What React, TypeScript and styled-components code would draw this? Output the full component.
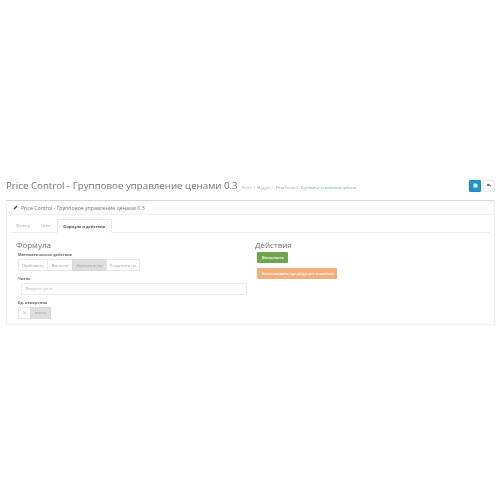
import React from "react";
import styled, { createGlobalStyle } from "styled-components";

const Global = createGlobalStyle`
  html, body { margin: 0; background: #fff; font-family: "Open Sans", "Noto Sans", sans-serif; }
  * { box-sizing: border-box; }
`;
const Page = styled.div`width: 500px; height: 500px; padding: 179px 5px 0 6px; background: #fff; filter: blur(0.3px);`;
const Header = styled.div`display: flex; align-items: center; height: 13px; margin-bottom: 8px;`;
const Title = styled.h1`margin: 0; font-size: 9.72px; font-weight: 400; color: #747474; white-space: nowrap; line-height: 13px;`;
const Crumbs = styled.div`display: flex; gap: 1.8px; margin-left: 4px; font-size: 3.65px; white-space: nowrap; padding-top: 3px;`;
const Crumb = styled.span<{ $muted?: boolean }>`color: ${p => (p.$muted ? "#a5a5a5" : "#7fa3bd")};`;
const Actions = styled.div`margin-left: auto; display: flex; gap: 2px;`;
const IconBtn = styled.div<{ $primary?: boolean }>`
  width: 12px; height: 12px; border-radius: 1px; display: flex; align-items: center; justify-content: center;
  background: ${p => (p.$primary ? "#1e91cf" : "#fff")};
  border: 1px solid ${p => (p.$primary ? "#1a85bf" : "#eaeaea")};
`;
const Panel = styled.section`border: 1px solid #f0f0f0; border-top: 1px solid #d4d4d4; height: 125px;`;
const PanelHead = styled.div`
  height: 14px; border-bottom: 1px solid #f1f1f1; background: #fcfcfc; padding-left: 6px;
  display: flex; align-items: center; gap: 3px; font-size: 5.2px; color: #777;
`;
const Tabs = styled.div`display: flex; align-items: flex-end; height: 18px; margin: 0 4px 0 3px; border-bottom: 1px solid #efefef; padding-left: 0.5px;`;
const Tab = styled.div<{ $active?: boolean }>`
  height: ${p => (p.$active ? "14px" : "13px")}; padding: 0 5.5px; display: flex; align-items: center;
  font-size: 3.8px; white-space: nowrap;
  color: ${p => (p.$active ? "#555" : "#a5a5a5")}; font-weight: ${p => (p.$active ? 700 : 400)};
  ${p => p.$active && "border: 1px solid #e8e8e8; border-bottom: 1px solid #fff; margin-bottom: -1px; background:#fff;"}
`;
const Columns = styled.div`display: grid; grid-template-columns: 241px 1fr; padding: 6px 0 0 9px;`;
const Heading = styled.h2`margin: 0; font-size: 8px; font-weight: 400; color: #707070; line-height: 11px;`;
const FormCol = styled.div`display: flex; flex-direction: column;`;
const FormBody = styled.div`display: flex; flex-direction: column; padding: 2px 0 0 2px;`;
const Label = styled.div`font-size: 3.8px; font-weight: 700; color: #6a6a6a; line-height: 5px; white-space: nowrap; margin-bottom: 2px;`;
const Group = styled.div`display: flex; align-self: flex-start; margin-bottom: 4.5px;`;
const Seg = styled.div<{ $on?: boolean; $w: number }>`
  width: ${p => p.$w}px; height: 12px; display: flex; align-items: center; justify-content: center;
  font-size: 4px; color: #999; white-space: nowrap;
  border: 1px solid ${p => (p.$on ? "#d8d8d8" : "#e8e8e8")}; margin-left: -1px;
  background: ${p => (p.$on ? "#dedede" : "#fff")};
  &:first-child { margin-left: 0; }
`;
const Input = styled.div`
  width: 226px; height: 12px; margin: 0 0 5px 3px; border: 1px solid #ececec; padding-left: 4px;
  display: flex; align-items: center; font-size: 3.8px; color: #b5b5b5;
`;
const ActionCol = styled.div`display: flex; flex-direction: column; align-items: flex-start; gap: 5px;`;
const ActionHeading = styled(Heading)`margin-bottom: -3px; margin-left: -2px;`;
const Btn = styled.div<{ $bg: string; $w: number }>`
  width: ${p => p.$w}px; height: 11px; background: ${p => p.$bg}; border-radius: 1px; color: #fff;
  font-size: 3.8px; font-weight: 600; display: flex; align-items: center; padding-left: 5px; white-space: nowrap;
`;

export default function App() {
  return (
    <Page>
      <Global />
      <Header>
        <Title>Price Control - Групповое управление ценами 0.3</Title>
        <Crumbs>
          <Crumb $muted>Home</Crumb><Crumb $muted>/</Crumb><Crumb $muted>Модули</Crumb><Crumb $muted>/</Crumb>
          <Crumb>Price Control - Групповое управление ценами</Crumb>
        </Crumbs>
        <Actions>
          <IconBtn $primary>
            <svg width="5" height="5" viewBox="0 0 10 10"><path d="M1 1h6l2 2v6H1z" fill="#dff0fa" /></svg>
          </IconBtn>
          <IconBtn>
            <svg width="6" height="5" viewBox="0 0 12 10"><path d="M5 1L1 4l4 3V5c3 0 4 1 5 4 .5-4-1-6-5-6.500z" fill="#555" /></svg>
          </IconBtn>
        </Actions>
      </Header>
      <Panel>
        <PanelHead>
          <svg width="5" height="5" viewBox="0 0 10 10"><path d="M1 9l.6-2.600L7 1l2 2-5.400 5.400z" fill="#444" /></svg>
          Price Control - Групповое управление ценами 0.3
        </PanelHead>
        <Tabs>
          <Tab>Фильтр</Tab>
          <Tab>Цены</Tab>
          <Tab $active>Формула и действия</Tab>
        </Tabs>
        <Columns>
          <FormCol>
            <Heading>Формула</Heading>
            <FormBody>
              <Label>Математическое действие</Label>
              <Group>
                <Seg $w={30}>Прибавить</Seg>
                <Seg $w={26}>Вычесть</Seg>
                <Seg $w={35} $on>Умножить на</Seg>
                <Seg $w={34}>Разделить на</Seg>
              </Group>
              <Label>Число</Label>
              <Input>Введите число</Input>
              <Label>Ед. измерения</Label>
              <Group>
                <Seg $w={13}>%</Seg>
                <Seg $w={21} $on>число</Seg>
              </Group>
            </FormBody>
          </FormCol>
          <ActionCol>
            <ActionHeading>Действия</ActionHeading>
            <Btn $bg="#6ea64f" $w={31}>Выполнить</Btn>
            <Btn $bg="#f3ae7c" $w={80}>Восстановить предыдущее значение</Btn>
          </ActionCol>
        </Columns>
      </Panel>
    </Page>
  );
}
